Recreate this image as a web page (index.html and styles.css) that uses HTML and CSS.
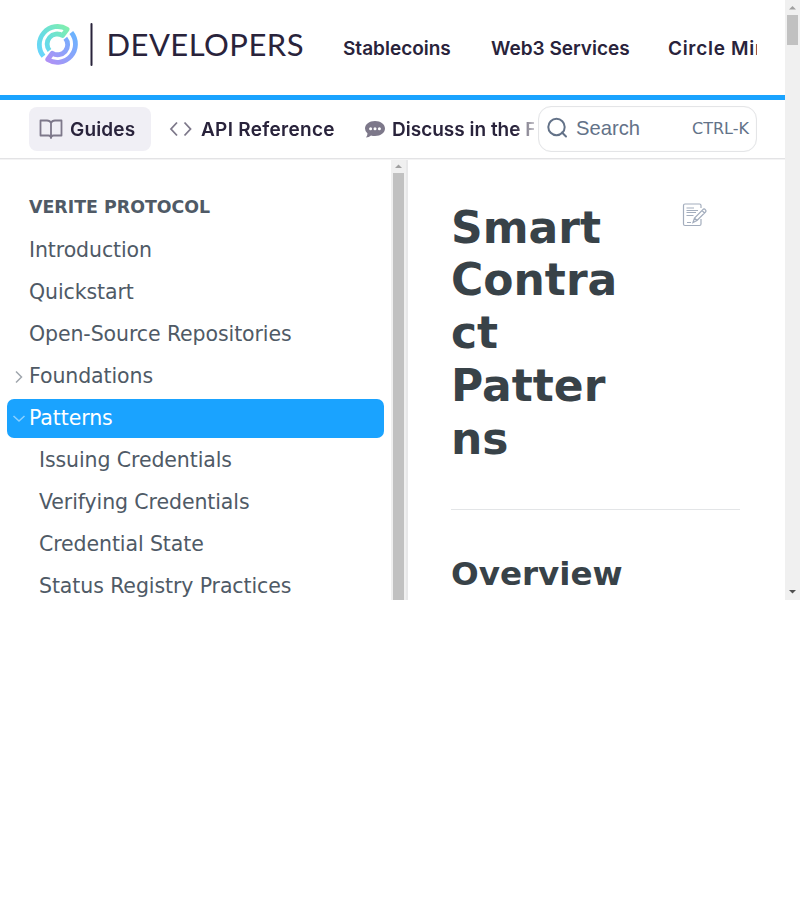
FILE: index.html
```
<!DOCTYPE html>
<html lang="en">
<head>
<meta charset="utf-8">
<title>Smart Contract Patterns</title>
<link rel="stylesheet" href="styles.css">
</head>
<body>
<div class="viewport">
  <div class="page">
    <header class="top">
      <svg class="logo" width="268" height="50" viewBox="0 0 268 50">
        <defs>
          <linearGradient id="ga" x1="0" y1="1" x2="1" y2="0"><stop offset="0" stop-color="#68d4ff"/><stop offset=".45" stop-color="#68dde0"/><stop offset="1" stop-color="#80efad"/></linearGradient>
          <linearGradient id="gb" x1="0" y1="1" x2="1" y2="0"><stop offset="0" stop-color="#b090f5"/><stop offset="1" stop-color="#68b5ff"/></linearGradient>
        </defs>
        <g fill="none" stroke-width="4.800" stroke-linejoin="round">
          <path stroke="url(#ga)" d="M7.500 36.300A18.200 18.200 0 0 1 31.200 9.300L26.500 15.600A10 10 0 0 0 13.500 30.500"/>
          <path stroke="url(#gb)" d="M35.300 12.500A18.200 18.200 0 0 1 11.600 39.500L16.300 33.200A10 10 0 0 0 29.300 18.300"/>
        </g>
        <path d="M55.500 4v41" stroke="#29233b" stroke-width="2" stroke-linecap="round"/>
        <text class="wordmark" x="70.500" y="35.500" textLength="197" lengthAdjust="spacing">DEVELOPERS</text>
      </svg>
      <nav class="topnav"><a class="n1">Stablecoins</a><a class="n2">Web3 Services</a><a class="n3">Circle Mint</a></nav>
    </header>
    <div class="subbar">
      <nav class="tabs">
        <a class="tab active"><svg width="24" height="22" viewBox="0 0 24 22" fill="none" stroke="#7d788a" stroke-width="1.8" stroke-linejoin="round"><path d="M12 5Q11 2.5 8 2.5H1.500V17.500H9.500Q12 17.500 12 20Q12 17.500 14.500 17.500H22.500V2.500H16Q13 2.500 12 5V20"/></svg><span class="t1">Guides</span></a>
        <a class="tab"><svg width="24" height="22" viewBox="0 0 24 22" fill="none" stroke="#7d788a" stroke-width="1.8"><path d="M8 4.500L2 11L8 17.500M15.500 4.500L21.500 11L15.500 17.500"/></svg><span class="t2">API Reference</span></a>
        <a class="tab"><svg width="22" height="22" viewBox="0 0 22 22"><path fill="#7d788a" d="M11 3C16.700 3 21 6.200 21 10.500S16.700 18 11 18Q8.800 18 7 17.400Q5 19.300 2 19.500Q3.500 17.500 3.500 15.600Q1 13.500 1 10.500C1 6.200 5.300 3 11 3Z"/><g fill="#fff"><circle cx="6.600" cy="10.700" r="1.500"/><circle cx="11" cy="10.700" r="1.500"/><circle cx="15.400" cy="10.700" r="1.500"/></g></svg><span class="t3">Discuss in the Forum</span></a>
      </nav>
      <div class="search"><svg width="22" height="22" viewBox="0 0 22 22" fill="none" stroke="#637288" stroke-width="2"><circle cx="9.500" cy="10" r="8.200"/><path d="M15 15.500L19 19.500" stroke-linecap="round"/></svg><span class="ph">Search</span><kbd>CTRL-K</kbd></div>
    </div>
    <div class="body">
      <aside class="side">
        <div class="menu">
          <h3>VERITE PROTOCOL</h3>
          <a>Introduction</a>
          <a>Quickstart</a>
          <a>Open-Source Repositories</a>
          <a><svg class="chev" width="14" height="14" viewBox="0 0 14 14"><path d="M4 1.500L9.500 7L4 12.500"/></svg>Foundations</a>
          <a class="sel"><svg class="chev" width="14" height="14" viewBox="0 0 14 14"><path d="M1.500 4L7 9L12.500 4"/></svg>Patterns</a>
          <a class="sub">Issuing Credentials</a>
          <a class="sub">Verifying Credentials</a>
          <a class="sub">Credential State</a>
          <a class="sub">Status Registry Practices</a>
        </div>
        <div class="bar"><svg width="15" height="13"><path d="M4 8h7L7.500 4.500z" fill="#a0a0a0"/></svg><div class="thumb"></div></div>
      </aside>
      <main class="content">
        <div class="headrow">
          <h1>Smart Contract Patterns</h1>
          <svg class="edit" width="26" height="26" viewBox="0 0 26 26" fill="none" stroke="#a3adbd" stroke-width="1.200"><path d="M19 6V3.500Q19 2 17.500 2H3Q1.500 2 1.500 3.500V22Q1.500 23.500 3 23.500H17.500Q19 23.500 19 22V17M4.500 6H12M4.500 8.500H16M4.500 10.500H14M4.500 13.500H11.500M5 20.500H9"/><path d="M11 20.500L12.500 16L21.500 7Q22.500 6.500 23.500 8Q24.500 9 23.500 10L15 18.500ZM20 8.500L22.500 11M12.500 16L15 18.500"/></svg>
        </div>
        <h2>Overview</h2>
      </main>
    </div>
  </div>
  <div class="bar pagebar"><svg width="15" height="15"><path d="M4 9.500h7L7.500 6z" fill="#a0a0a0"/></svg><div class="thumb"></div><svg class="down" width="15" height="15"><path d="M4 5h7L7.500 8.500z" fill="#505050"/></svg></div>
</div>
</body>
</html>
```
FILE: styles.css
```
* { box-sizing: border-box; }
body { margin: 0; background: #fff; font-family: "DejaVu Sans", sans-serif; color: #4f5a66; }
h1, h2, h3 { margin: 0; }
svg { display: block; flex: none; }
.viewport { display: flex; width: 800px; height: 600px; overflow: hidden; }
.page { width: 785px; display: flex; flex-direction: column; }
.top { height: 100px; flex: none; border-bottom: 5px solid #1aa3ff; display: flex; padding: 20px 28px 0 36px; }
.wordmark { font: 400 31px Lato, sans-serif; fill: #29233b; }
.topnav { display: flex; margin-left: 39px; flex: 1; min-width: 0; overflow: hidden; height: 58px; line-height: 58px; white-space: nowrap; }
.topnav a, .tab { font-family: Inter, sans-serif; font-weight: 600; font-size: 19px; color: #29233b; }
.n1 { width: 148px; flex: none; }
.n2 { width: 177px; flex: none; }
.n3 { flex: none; letter-spacing: .7px; }
.t1 { letter-spacing: .15px; }
.t2 { letter-spacing: .3px; }
.subbar { height: 60px; flex: none; border-bottom: 1px solid #f3f3f4; box-shadow: inset 0 -1px #e3e3e5; display: flex; padding: 6px 28px 0 29px; }
.tabs { display: flex; width: 505px; overflow: hidden; flex: none; gap: 8px; padding-top: 1px; -webkit-mask-image: linear-gradient(90deg, #000 486px, transparent 512px); mask-image: linear-gradient(90deg, #000 486px, transparent 512px); }
.tab { display: flex; align-items: center; height: 44px; padding: 0 10px; gap: 7px; border-radius: 8px; white-space: nowrap; flex: none; }
.active { background: #f0eff5; width: 122px; }
.tab:nth-child(2) { width: 187px; gap: 8px; }
.tab:nth-child(3) { gap: 6px; }
.search { width: 220px; margin-left: 4px; height: 46px; border: 1.500px solid #e4e5e7; box-shadow: inset 0 0 1px #e4e5e7; border-radius: 13px; background: #fff; display: flex; align-items: center; padding: 0 7px 2px 8px; color: #637288; }
.ph { font: 20.200px "Liberation Sans", sans-serif; margin-left: 7px; }
kbd { font: 16px "DejaVu Sans", sans-serif; margin-left: auto; }
.body { display: flex; flex: 1; min-height: 0; }
.side { width: 408px; flex: none; display: flex; border-right: 2px solid #e8e8e9; overflow: hidden; }
.menu { width: 391px; padding: 34px 7px 0; }
.menu h3 { font-size: 17.400px; line-height: 26px; padding-left: 22px; margin-bottom: 11px; }
.menu a { display: flex; align-items: center; height: 39px; margin-bottom: 3px; padding: 0 0 2px 22px; font-size: 20.500px; letter-spacing: -.1px; border-radius: 7px; white-space: nowrap; }
.menu a.sub { padding-left: 32px; }
.menu a.sel { background: #1aa3ff; color: #fff; }
.chev { margin: 2px 3px 0 -17px; fill: none; stroke: #a0a6ad; stroke-width: 1.500; }
.sel .chev { stroke: #8dd1ff; }
.bar { width: 15px; flex: none; background: #f0f0f0; display: flex; flex-direction: column; align-items: center; }
.thumb { width: 11px; flex: 1; background: #c1c1c1; }
.pagebar .thumb { flex: none; height: 30px; }
.down { margin-top: auto; }
.content { width: 377px; padding: 41.500px 45px 0 43px; color: #384248; }
.headrow { display: flex; justify-content: space-between; height: 308.500px; border-bottom: 1px solid #e3e5e7; padding-right: 32px; }
h1 { width: 180px; font-size: 44px; line-height: 52.800px; overflow-wrap: anywhere; }
h2 { font-size: 32.600px; line-height: 40px; margin-top: 44px; }
```
